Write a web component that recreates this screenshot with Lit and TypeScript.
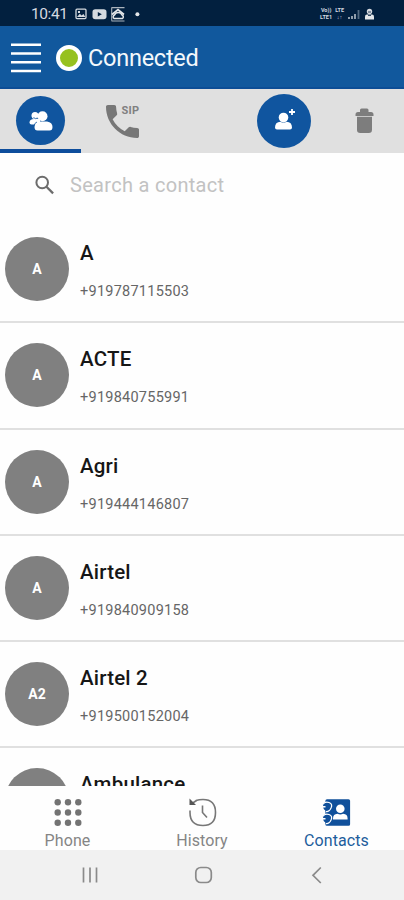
import { LitElement, html, css, svg } from "lit";
import { customElement } from "lit/decorators.js";

interface Contact {
  initials: string;
  name: string;
  phone: string;
}

const contacts: Contact[] = [
  { initials: "A", name: "A", phone: "+919787115503" },
  { initials: "A", name: "ACTE", phone: "+919840755991" },
  { initials: "A", name: "Agri", phone: "+919444146807" },
  { initials: "A", name: "Airtel", phone: "+919840909158" },
  { initials: "A2", name: "Airtel 2", phone: "+919500152004" },
  { initials: "", name: "Ambulance", phone: "" },
];

@customElement("status-bar")
class StatusBar extends LitElement {
  static styles = css`
    :host {
      display: flex;
      align-items: center;
      height: 26px;
      box-sizing: border-box;
      padding: 1px 28px 0 31px;
      background: #02203f;
      color: #d5dae0;
    }
    .time { width: 44px; font-size: 15.5px; letter-spacing: -0.4px; white-space: nowrap; }
    svg { display: block; }
    .right { margin-left: auto; display: flex; align-items: center; gap: 3px; }
    .net { display: grid; grid-template-rows: 6.5px 6.5px; font-size: 5.5px; line-height: 6.5px; font-weight: 700; text-align: center; }
  `;
  render() {
    return html`
      <span class="time">10:41</span>
      <svg width="68" height="20" viewBox="75 3 68 20">
        <rect x="76" y="8.2" width="10" height="9.4" rx="1" fill="none" stroke="#d5dae0" stroke-width="1.3" />
        <path d="M77 16l2.8-3.3 1.8 1.8 1.8-1.5 2 3z" fill="#d5dae0" />
        <rect x="78" y="10" width="2" height="2" fill="#d5dae0" />
        <rect x="92.5" y="8.3" width="14" height="10" rx="2.8" fill="#d5dae0" />
        <path d="M97.8 11v4.6l4-2.3z" fill="#02203f" />
        <path d="M111.500 6.600h13M111.500 20h13M111.700 6.600v13" fill="none" stroke="#aab3bd" stroke-width="1.1" />
        <path d="M112 13.500l6-5 6 5" fill="none" stroke="#e4e7ea" stroke-width="1.7" />
        <path d="M114 17.500h8.500a2 2 0 0 0-.5-3.500a4 4 0 0 0-7.500 0a2 2 0 0 0-.5 3.500z" fill="none" stroke="#e4e7ea" stroke-width="1.5" />
        <circle cx="137.4" cy="13.3" r="2" fill="#e4e7ea" />
      </svg>
      <span class="right">
        <span class="net"><span>Vo))</span><span>LTE1</span></span>
        <span class="net"><span>LTE</span><span>↓↑</span></span>
        <svg width="29" height="16" viewBox="348 5 29 16">
          <path d="M350 18v-2M353 18v-3M356 18v-5" stroke="#b4bdc7" stroke-width="1.6" />
          <path d="M359.5 18V9" stroke="#526a82" stroke-width="1.8" />
          <circle cx="370.5" cy="10.5" r="2.7" fill="#d5dae0" />
          <path d="M366 18.5v-3q0-2 2-2h5q2 0 2 2v3z" fill="#e4e7ea" />
          <path d="M369 11h3M369 14.5h3" stroke="#02203f" stroke-width=".8" />
        </svg>
      </span>
    `;
  }
}

@customElement("contact-row")
class ContactRow extends LitElement {
  static properties = { contact: { attribute: false } };
  declare contact: Contact;
  static styles = css`
    :host {
      display: flex;
      box-sizing: border-box;
      height: 106.3px;
      padding: 20px 0 0 5px;
      border-bottom: 2px solid #e0e0e0;
      flex: none;
    }
    .avatar {
      width: 64px;
      height: 64px;
      border-radius: 50%;
      background: #808080;
      color: #fff;
      font-size: 14px;
      font-weight: 700;
      display: flex;
      align-items: center;
      justify-content: center;
      flex: none;
    }
    .text { margin: 4px 0 0 11px; }
    .name { font-size: 20.5px; line-height: 24px; font-weight: 500; color: #161616; white-space: nowrap; letter-spacing: 0.2px; }
    .phone { margin-top: 17px; font-size: 14.5px; line-height: 20px; color: #666; letter-spacing: 0.25px; }
  `;
  render() {
    return html`
      <div class="avatar">${this.contact.initials}</div>
      <div class="text">
        <div class="name">${this.contact.name}</div>
        <div class="phone">${this.contact.phone}</div>
      </div>
    `;
  }
}

const phoneIcon = svg`<g fill="#737373">${[0, 1, 2].map((r) =>
  [0, 1, 2].map((c) => svg`<circle cx=${5.7 + c * 10.3} cy=${5.2 + r * 10.3} r="3.2" />`)
)}</g>`;

const historyIcon = svg`<g fill="none" stroke="#777" stroke-width="1.6">
  <path d="M9 3.500Q12 2.500 16 2.500q12.500 0 12.500 13t-12.500 13q-13 0-13-13v-2" />
  <path d="M9.500 3.500L5 6.500" />
  <path d="M15.500 8.500v7l4.500 5" />
  <path d="M2.500 1.500v6.500h6.500z" fill="#555" stroke="none" />
</g>`;

const contactsIcon = svg`
  <path d="M6 2.2h21.5q1.6 0 1.6 1.6v23.4q0 1.6-1.6 1.6H6q-1.6 0-1.6-1.6V3.8q0-1.6 1.6-1.6z" fill="#10509b" />
  <g fill="#10509b">
    <path d="M1.800 7.500Q4 4 8 5.500t2 5.500-5 3.500" stroke="#fff" stroke-width="1.3" />
    <path d="M1.800 19.500q2.200-3.500 6.200-2t2 5.500-5 3.500" stroke="#fff" stroke-width="1.3" />
    <circle cx="5.800" cy="9.800" r="3.600" /><circle cx="5.800" cy="21.800" r="3.600" />
  </g>
  <path d="M0 9.800h4.500M0 21.800h4.500" stroke="#fff" stroke-width="1.600" />
  <circle cx="19.3" cy="11.8" r="4.3" fill="#fff" />
  <path d="M12 22.500v-1q0-4.500 4.500-4.800 2.800 1.500 5.600 0 4.500.3 4.500 4.800v1z" fill="#fff" />`;

@customElement("app-root")
class AppRoot extends LitElement {
  static styles = css`
    :host {
      display: flex;
      flex-direction: column;
      width: 404px;
      height: 900px;
      overflow: hidden;
      background: #fefefe;
      font-family: Roboto, "Liberation Sans", sans-serif;
    }
    svg { display: block; flex: none; }
    .header {
      height: 63px;
      box-sizing: border-box;
      display: flex;
      align-items: center;
      background: #11589d;
      border-bottom: 2px solid #0c4d96;
      padding: 2px 0 0 11px;
      color: #f4f8fc;
      flex: none;
    }
    .title { margin-left: 6px; font-size: 23.5px; line-height: 30px; letter-spacing: -0.25px; }
    .dot {
      margin-left: 15px;
      width: 26px;
      height: 26px;
      box-sizing: border-box;
      border: 4px solid #fff;
      border-radius: 50%;
      background: #96c11f;
    }
    .tabs {
      display: grid;
      grid-template-columns: 81px 82px 241px;
      height: 64px;
      background: #e0e0e0;
      flex: none;
    }
    .tab { display: flex; justify-content: center; box-sizing: border-box; }
    .tab.active { border-bottom: 4px solid #0d4d9c; padding-top: 7px; }
    .round {
      display: flex;
      align-items: center;
      justify-content: center;
      border-radius: 50%;
      background: #10559f;
      width: 49px;
      height: 49px;
    }
    .round.add { width: 54px; height: 54px; }
    .sip { display: flex; padding: 16px 0 0 25px; }
    .sip .tag { font-size: 11px; font-weight: 700; color: #808080; line-height: 12px; margin: 0 0 0 -17.5px; letter-spacing: 0.2px; }
    .actions { display: flex; padding: 5px 0 0 93.5px; gap: 44px; }
    .actions .trash { margin-top: 13px; }
    .search {
      display: flex;
      align-items: center;
      height: 64px;
      padding: 0 0 0 34px;
      gap: 15px;
      font-size: 20px;
      color: #c2c2c2;
      letter-spacing: 0.3px;
      flex: none;
    }
    .list { flex: 1; min-height: 0; overflow: hidden; display: flex; flex-direction: column; }
    .nav { display: grid; grid-template-columns: 135px 134px 135px; height: 64px; flex: none; background: #fefefe; overflow: hidden; }
    .item { display: flex; flex-direction: column; align-items: center; padding-top: 11px; font-size: 16px; line-height: 20px; color: #858585; letter-spacing: 0.1px; }
    .item svg { margin-bottom: 3px; }
    .item.on { color: #1d5d9c; }
    .system { height: 50px; background: #f1f1f1; flex: none; display: flex; align-items: center; padding-left: 81px; gap: 92px; }
    .system .back { margin-left: 2px; }
  `;
  render() {
    return html`
      <status-bar></status-bar>
      <div class="header">
        <svg width="30" height="32" viewBox="0 0 30 32">
          <path d="M0 2.8h30M0 11.5h30M0 20.2h30M0 28.9h30" stroke="#fff" stroke-width="2.5" />
        </svg>
        <span class="dot"></span>
        <span class="title">Connected</span>
      </div>
      <div class="tabs">
        <div class="tab active">
          <span class="round">
            <svg width="26" height="22" viewBox="0 0 26 22" fill="#fff">
              <circle cx="7" cy="5.500" r="3.500" /><circle cx="14.500" cy="6.300" r="5" />
              <path d="M1.500 12.500q0-3.500 4.500-3.500h6v5.500H3.500q-2 0-2-2z" />
              <path d="M6.500 17q0-4.500 5.500-5.500h7q5.500.8 5.500 5.500 0 3.500-3 3.500H9.500q-3 0-3-3.500z" />
              <path d="M5.500 7.500q2 2 4 .5M6 15.500q.5-2.500 3-3.500" fill="none" stroke="#10559f" stroke-width=".8" />
            </svg>
          </span>
        </div>
        <div class="sip">
          <svg width="33" height="33" viewBox="3 3 18 18">
            <path d="M6.620 10.790c1.440 2.830 3.760 5.140 6.590 6.590l2.200-2.200c.27-.27.670-.36 1.020-.24 1.120.37 2.330.57 3.570.57.550 0 1 .45 1 1V20c0 .550-.45 1-1 1-9.390 0-17-7.610-17-17 0-.550.450-1 1-1h3.500c.550 0 1 .450 1 1 0 1.250.200 2.450.570 3.570.110.350.030.740-.250 1.020l-2.200 2.200z" fill="#777" />
          </svg>
          <span class="tag">SIP</span>
        </div>
        <div class="actions">
          <span class="round add">
            <svg width="28" height="26" viewBox="0 0 28 26" fill="#fff">
              <circle cx="13.500" cy="9.500" r="4.800" />
              <path d="M5 19.500q0-5.500 5.500-5.800 3 1.800 6 0 5.500.3 5.500 5.800 0 2-2 2h-13q-2 0-2-2z" />
              <path d="M22 1v6M19 4h6" stroke="#fff" stroke-width="1.8" />
            </svg>
          </span>
          <svg class="trash" width="20" height="28" viewBox="0 0 20 28" fill="#7d7d7d">
            <path d="M5 5V3Q5 1.500 6.500 1.500h5.500Q13.500 1.500 13.500 3v2H16q2.500 0 2.500 2.500V9H.5V7.500Q.5 5 3 5z" />
            <path d="M2 9.800h15v13q0 3.200-3.200 3.200H5.200Q2 26 2 22.800z" />
          </svg>
        </div>
      </div>
      <div class="search">
        <svg width="21" height="21" viewBox="0 0 21 21" fill="none" stroke="#6c6c6c">
          <circle cx="8.200" cy="7.500" r="5.800" stroke-width="2" />
          <path d="M12.500 11.800l6.600 6.600" stroke-width="2.300" />
        </svg>
        <span>Search a contact</span>
      </div>
      <div class="list">${contacts.map((c) => html`<contact-row .contact=${c}></contact-row>`)}</div>
      <div class="nav">
        <div class="item"><svg width="32" height="31">${phoneIcon}</svg>Phone</div>
        <div class="item"><svg width="31" height="31">${historyIcon}</svg>History</div>
        <div class="item on"><svg width="31" height="31">${contactsIcon}</svg>Contacts</div>
      </div>
      <div class="system">
        <svg width="19" height="18"><path d="M2.500 1.500v15M9 1.500v15M15.500 1.500v15" stroke="#8a8a8a" stroke-width="1.700" /></svg>
        <svg width="22" height="20"><rect x="3.800" y="2.500" width="15.500" height="15" rx="5" fill="none" stroke="#8a8a8a" stroke-width="1.700" /></svg>
        <svg class="back" width="20" height="20"><path d="M12.800 2.500L5 10.300l7.800 7.700" fill="none" stroke="#8a8a8a" stroke-width="1.700" /></svg>
      </div>
    `;
  }
}
